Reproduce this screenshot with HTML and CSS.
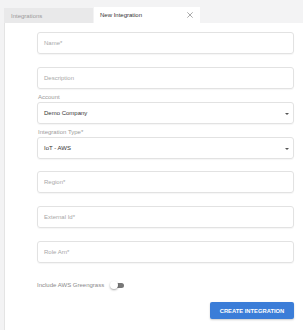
FILE: index.html
```html
<!DOCTYPE html>
<html>
<head>
    <title>New Integration</title>
    <meta name="viewport" content="width=device-width, initial-scale=1.0">
    <link rel="stylesheet" href="styles.css">
</head>
<body>
    <!-- Tabs -->
    <div class="tabs">
        <div class="tab">Integrations</div>
        <div class="tab active">
            <span>New Integration</span>
            <svg class="tab-close" viewBox="0 0 10 10" width="6" height="6" fill="none" stroke="currentColor" stroke-width="1.2" stroke-linecap="round">
                <line x1="1" y1="1" x2="9" y2="9"></line>
                <line x1="9" y1="1" x2="1" y2="9"></line>
            </svg>
        </div>
    </div>

    <div class="panel">
        <form class="form">
            <div class="group">
                <div class="field placeholder">Name*</div>
            </div>
            <div class="group">
                <div class="field placeholder">Description</div>
            </div>
            <div class="group labeled">
                <div class="label">Account</div>
                <div class="field select">Demo Company<span class="caret"></span></div>
            </div>
            <div class="group labeled">
                <div class="label">Integration Type*</div>
                <div class="field select">IoT - AWS<span class="caret"></span></div>
            </div>
            <div class="group">
                <div class="field placeholder">Region*</div>
            </div>
            <div class="group">
                <div class="field placeholder">External Id*</div>
            </div>
            <div class="group">
                <div class="field placeholder">Role Arn*</div>
            </div>

            <div class="switch-row">
                <span>Include AWS Greengrass</span>
                <span class="switch"><span class="switch-thumb"></span></span>
            </div>

            <div class="actions">
                <button type="button" class="btn-primary">Create Integration</button>
            </div>
        </form>
    </div>
</body>
</html>
```
FILE: styles.css
```css
body {
    margin: 0;
    background-color: #f3f3f4;
    font-family: 'Liberation Sans', Arial, sans-serif;
    font-size: 6px;
    color: #333;
}

.tabs {
    display: flex;
    align-items: flex-end;
    padding: 6px 0 0 4px;
    height: 17px;
}

.tab {
    width: 82px;
    height: 15px;
    padding-left: 7px;
    background-color: #e9e9ea;
    color: #9a9a9a;
    display: flex;
    align-items: center;
    justify-content: space-between;
    box-sizing: content-box;
}

.tab.active {
    width: 93px;
    height: 16px;
    margin-left: 1px;
    padding: 0 7px 0 6px;
    background-color: white;
    color: #333;
}

.tab-close {
    color: #888;
}

.panel {
    margin-left: 4px;
    min-height: 307px;
    background-color: white;
    border-left: 1px solid #e4e4e4;
    padding: 9px 9px 0 32px;
}

.form {
    display: flex;
    flex-direction: column;
}

.group + .group {
    margin-top: 13px;
}

.group.labeled {
    margin-top: 4px;
}

.group.labeled + .group:not(.labeled) {
    margin-top: 12px;
}

.label {
    height: 9px;
    line-height: 8px;
    color: #9b9b9b;
    padding-left: 1px;
}

.field {
    height: 22px;
    box-sizing: border-box;
    border: 1px solid #e2e2e2;
    border-radius: 3px;
    box-shadow: 0 1px 1px rgba(0, 0, 0, 0.04);
    padding: 0 6px;
    display: flex;
    align-items: center;
    position: relative;
}

.field.placeholder {
    color: #a8a8a8;
}

.field.select {
    color: #333;
}

.caret {
    position: absolute;
    right: 4px;
    top: 10px;
    border-left: 2px solid transparent;
    border-right: 2px solid transparent;
    border-top: 2px solid #555;
}

.switch-row {
    margin-top: 17px;
    height: 10px;
    display: flex;
    align-items: center;
    gap: 7px;
    color: #8a8a8a;
}

.switch {
    position: relative;
    width: 13px;
    height: 5px;
    border-radius: 3px;
    background-color: #777;
}

.switch-thumb {
    position: absolute;
    left: -1px;
    top: -2px;
    width: 8px;
    height: 8px;
    border-radius: 50%;
    background-color: white;
    box-shadow: 0 1px 2px rgba(0, 0, 0, 0.35);
}

.actions {
    margin-top: 12px;
    display: flex;
    justify-content: flex-end;
}

.btn-primary {
    width: 84px;
    height: 17px;
    padding: 0;
    border: none;
    border-radius: 2px;
    background-color: #3b7dd8;
    color: white;
    font-family: inherit;
    font-size: 5.8px;
    font-weight: bold;
    text-transform: uppercase;
    box-shadow: 0 1px 2px rgba(0, 0, 0, 0.2);
}
```
